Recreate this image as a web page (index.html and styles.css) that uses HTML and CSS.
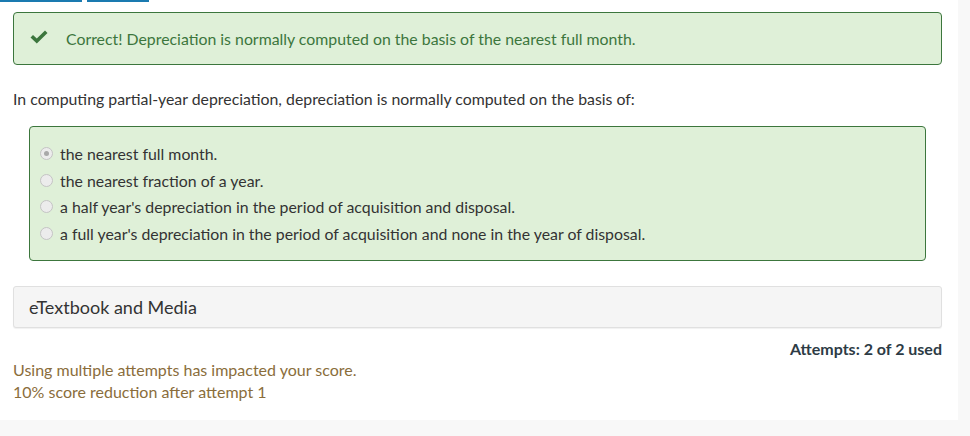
FILE: index.html
```html
<!DOCTYPE html>
<html lang="en">
<head>
    <meta charset="UTF-8">
    <meta name="viewport" content="width=device-width, initial-scale=1.0">
    <title>Question</title>
    <link rel="stylesheet" href="styles.css">
</head>
<body>
    <div class="page">
        <div class="link-edge">
            <span class="seg seg-a"></span>
            <span class="seg seg-b"></span>
        </div>

        <div class="alert-success">
            <svg class="check" width="18" height="15" viewBox="0 0 18 15">
                <path d="M0.5 7.5 L3 5 L6.8 8.6 L15 0.5 L17.5 3 L6.8 13.6 Z" fill="#3c763d"/>
            </svg>
            <span>Correct! Depreciation is normally computed on the basis of the nearest full month.</span>
        </div>

        <p class="question">In computing partial-year depreciation, depreciation is normally computed on the basis of:</p>

        <div class="answers">
            <label class="choice"><span class="radio checked"></span>the nearest full month.</label>
            <label class="choice"><span class="radio"></span>the nearest fraction of a year.</label>
            <label class="choice"><span class="radio"></span>a half year's depreciation in the period of acquisition and disposal.</label>
            <label class="choice"><span class="radio"></span>a full year's depreciation in the period of acquisition and none in the year of disposal.</label>
        </div>

        <div class="media-panel">eTextbook and Media</div>

        <div class="attempts">Attempts: 2 of 2 used</div>

        <div class="penalty">
            <div>Using multiple attempts has impacted your score.</div>
            <div>10% score reduction after attempt 1</div>
        </div>
    </div>
</body>
</html>
```

FILE: styles.css
```css
body {
    margin: 0;
    background: #f8f8f8;
    font-family: Lato, "Open Sans", sans-serif;
    color: #333;
}

.page {
    width: 958px;
    height: 420px;
    box-sizing: border-box;
    padding: 0 16px 0 13px;
    background: #fff;
    overflow: hidden;
}

.link-edge {
    display: flex;
    height: 2px;
    margin-left: -13px;
}

.seg {
    height: 2px;
    background: #1a7ab0;
}

.seg-a {
    width: 82px;
}

.seg-b {
    width: 62px;
    margin-left: 5px;
}

.alert-success {
    display: flex;
    align-items: center;
    margin-top: 10px;
    height: 53px;
    box-sizing: border-box;
    padding-left: 16px;
    border: 1px solid #3c763d;
    border-radius: 4px;
    background: #dff0d8;
    color: #3c763d;
    font-size: 15.85px;
}

.check {
    margin-right: 18px;
    margin-top: -2px;
}

.question {
    margin: 23px 0 0;
    font-size: 15.85px;
    line-height: 22px;
}

.answers {
    margin: 16px 16px 0;
    height: 135px;
    box-sizing: border-box;
    padding: 13px 10px 0;
    border: 1px solid #3c763d;
    border-radius: 4px;
    background: #dff0d8;
}

.choice {
    display: flex;
    align-items: center;
    height: 26.7px;
    font-size: 15.85px;
}

.radio {
    width: 11px;
    height: 11px;
    border: 1px solid #c4c4c4;
    border-radius: 50%;
    background: #ececec;
    margin-right: 7px;
    box-sizing: content-box;
    position: relative;
}

.radio.checked::after {
    content: "";
    position: absolute;
    left: 3px;
    top: 3px;
    width: 5px;
    height: 5px;
    border-radius: 50%;
    background: #a9a9a9;
}

.media-panel {
    margin-top: 25px;
    height: 42px;
    box-sizing: border-box;
    display: flex;
    align-items: center;
    padding-left: 15px;
    border: 1px solid #e0e0e0;
    border-radius: 3px;
    background: #f5f5f5;
    box-shadow: 0 1px 1px rgba(0, 0, 0, 0.06);
    font-size: 18px;
    color: #333;
}

.attempts {
    margin-top: 11px;
    text-align: right;
    font-weight: bold;
    font-size: 16px;
    color: #2d3b45;
    line-height: 20px;
}

.penalty {
    margin-top: 0;
    color: #8a6d3b;
    font-size: 16px;
    line-height: 22px;
}
```
